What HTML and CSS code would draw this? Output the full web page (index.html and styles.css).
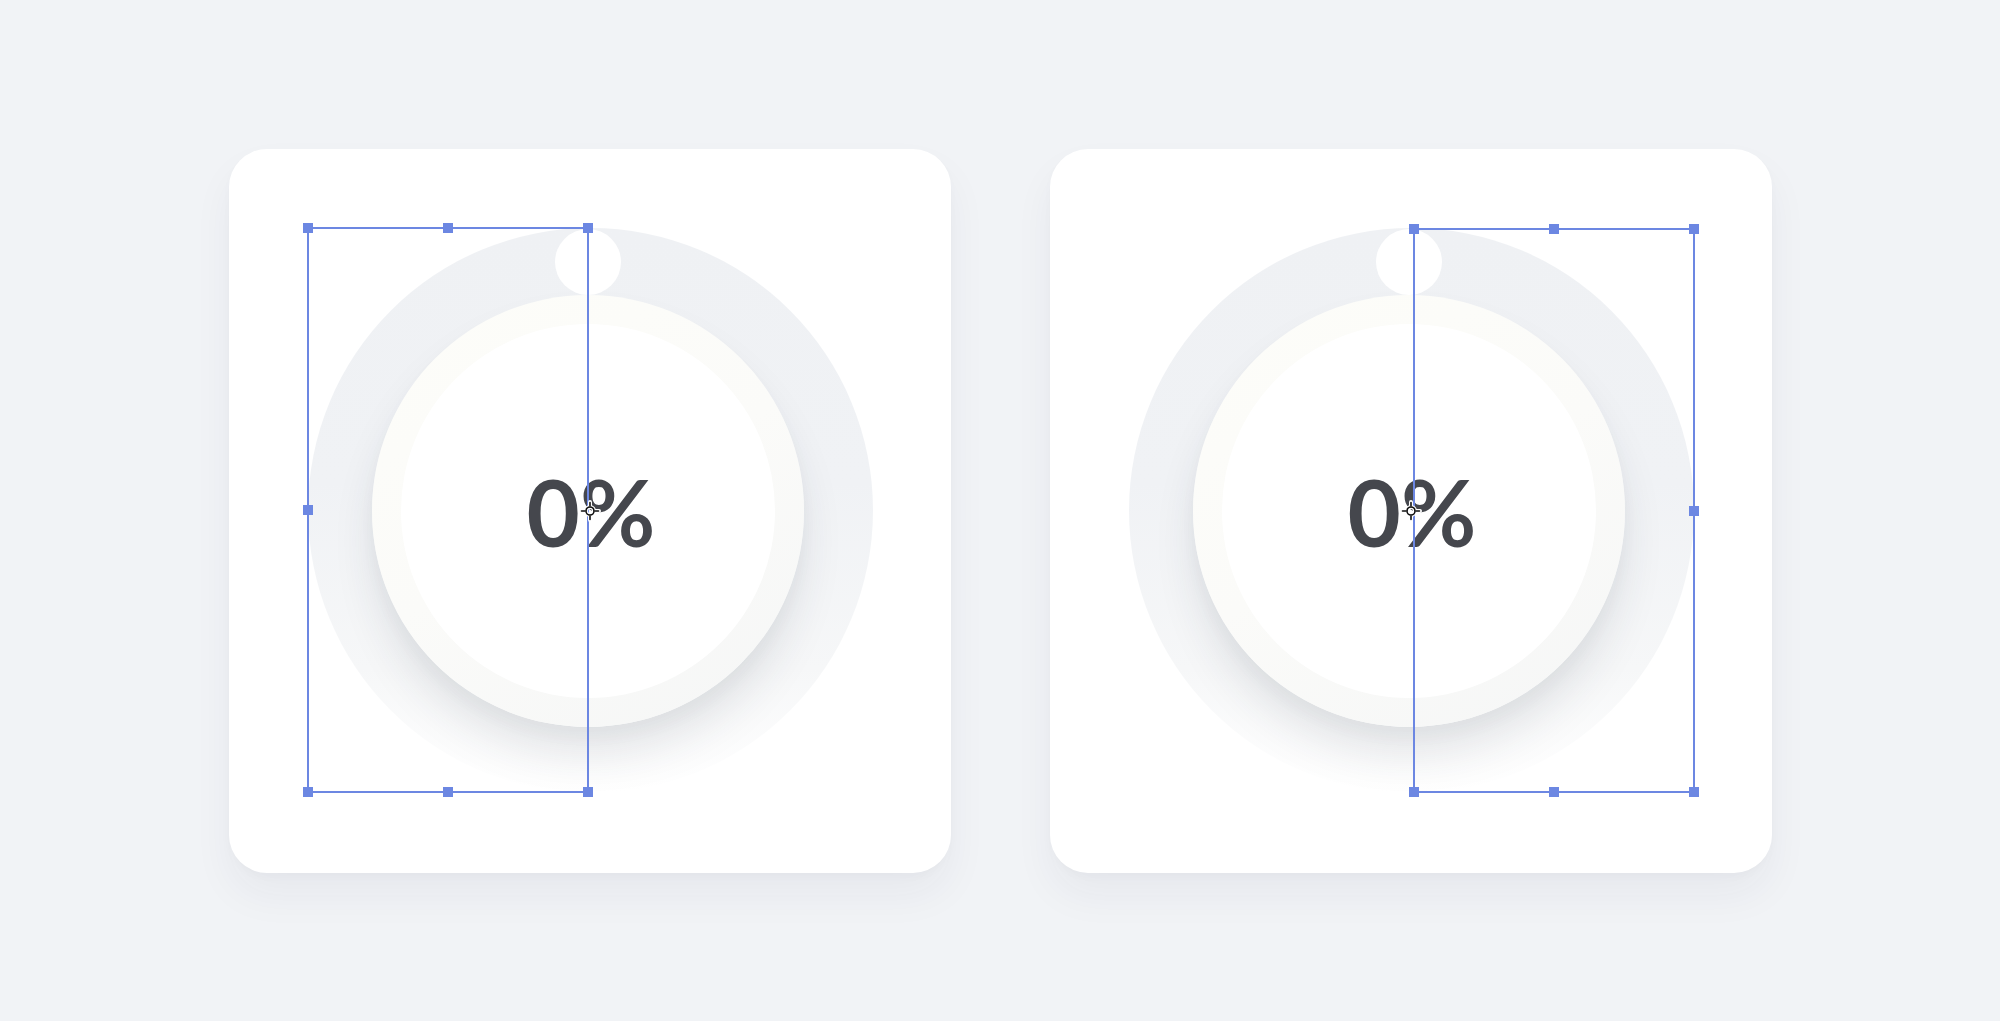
FILE: index.html
```html
<!DOCTYPE html>
<html>
<head>
<meta charset="utf-8">
<link rel="stylesheet" href="styles.css">
</head>
<body>
<main class="stage">
  <section class="card">
    <div class="dial">
      <div class="knob-dot"></div>
      <div class="knob">
        <div class="face"><span class="value">0%</span></div>
      </div>
      <div class="sel sel-left">
        <i class="h tl"></i><i class="h tm"></i><i class="h tr"></i>
        <i class="h ml"></i>
        <i class="h bl"></i><i class="h bm"></i><i class="h br"></i>
      </div>
      <svg class="cursor" width="24" height="24" viewBox="0 0 24 24">
        <g stroke="#fff" stroke-width="4" fill="none" stroke-linecap="round">
          <circle cx="12" cy="12" r="4"/>
          <path d="M12 3v4M12 17v4M3 12h4M17 12h4"/>
        </g>
        <g stroke="#111" stroke-width="1.6" fill="none" stroke-linecap="round">
          <circle cx="12" cy="12" r="4"/>
          <path d="M12 3.5v3.5M12 17v3.5M3.5 12h3.5M17 12h3.5"/>
        </g>
      </svg>
    </div>
  </section>
  <section class="card">
    <div class="dial">
      <div class="knob-dot"></div>
      <div class="knob">
        <div class="face"><span class="value">0%</span></div>
      </div>
      <div class="sel sel-right">
        <i class="h tl"></i><i class="h tm"></i><i class="h tr"></i>
        <i class="h mr"></i>
        <i class="h bl"></i><i class="h bm"></i><i class="h br"></i>
      </div>
      <svg class="cursor" width="24" height="24" viewBox="0 0 24 24">
        <g stroke="#fff" stroke-width="4" fill="none" stroke-linecap="round">
          <circle cx="12" cy="12" r="4"/>
          <path d="M12 3v4M12 17v4M3 12h4M17 12h4"/>
        </g>
        <g stroke="#111" stroke-width="1.6" fill="none" stroke-linecap="round">
          <circle cx="12" cy="12" r="4"/>
          <path d="M12 3.5v3.5M12 17v3.5M3.5 12h3.5M17 12h3.5"/>
        </g>
      </svg>
    </div>
  </section>
</main>
</body>
</html>
```

FILE: styles.css
```css
* { box-sizing: border-box; }
html, body { margin: 0; padding: 0; }
body {
  width: 2000px;
  height: 1021px;
  background: #f1f3f6;
  font-family: Lato, Roboto, "Liberation Sans", sans-serif;
  overflow: hidden;
}
.stage {
  height: 100%;
  display: flex;
  justify-content: center;
  align-items: center;
  gap: 99px;
  padding-left: 1px;
}
.card {
  width: 722px;
  height: 724px;
  background: #ffffff;
  border-radius: 38px;
  box-shadow: 0 22px 40px rgba(30, 40, 70, 0.05), 0 4px 10px rgba(30, 40, 70, 0.02);
  display: flex;
  justify-content: center;
  align-items: center;
}
.dial {
  position: relative;
  width: 565px;
  height: 565px;
  border-radius: 50%;
  background: linear-gradient(to bottom, #eff1f4 0%, #f0f2f5 45%, #f6f7f8 78%, #ffffff 100%);
  display: flex;
  justify-content: center;
  align-items: center;
}
.knob-dot {
  position: absolute;
  top: 1px;
  left: 50%;
  width: 66px;
  height: 66px;
  margin-left: -35px;
  border-radius: 50%;
  background: #ffffff;
}
.knob {
  width: 432px;
  height: 432px;
  border-radius: 50%;
  background: linear-gradient(150deg, #fdfdf9 0%, #fbfbf9 50%, #f5f6f6 100%);
  box-shadow: 0 30px 40px rgba(40, 50, 70, 0.10), 0 10px 16px rgba(40, 50, 70, 0.03);
  display: flex;
  justify-content: center;
  align-items: center;
  margin-left: -4px;
}
.face {
  width: 374px;
  height: 374px;
  border-radius: 50%;
  background: #ffffff;
  display: flex;
  justify-content: center;
  align-items: center;
}
.value {
  font-size: 92px;
  font-weight: 700;
  color: #45474d;
  line-height: 1;
  margin-left: 6px;
  margin-top: 2px;
}
.sel {
  position: absolute;
  top: -1px;
  width: 282px;
  height: 566px;
  border: 2px solid #6c87e2;
}
.sel-left { left: -1px; }
.sel-right { left: 284px; height: 565px; top: 0; }
.h {
  position: absolute;
  width: 10px;
  height: 10px;
  background: #6c87e2;
}
.tl { top: -6px; left: -6px; }
.tm { top: -6px; left: 50%; margin-left: -5px; }
.tr { top: -6px; right: -6px; }
.ml { top: 50%; margin-top: -5px; left: -6px; }
.mr { top: 50%; margin-top: -5px; right: -6px; }
.bl { bottom: -6px; left: -6px; }
.bm { bottom: -6px; left: 50%; margin-left: -5px; }
.br { bottom: -6px; right: -6px; }
.cursor {
  position: absolute;
  left: 270px;
  top: 271px;
}
```
